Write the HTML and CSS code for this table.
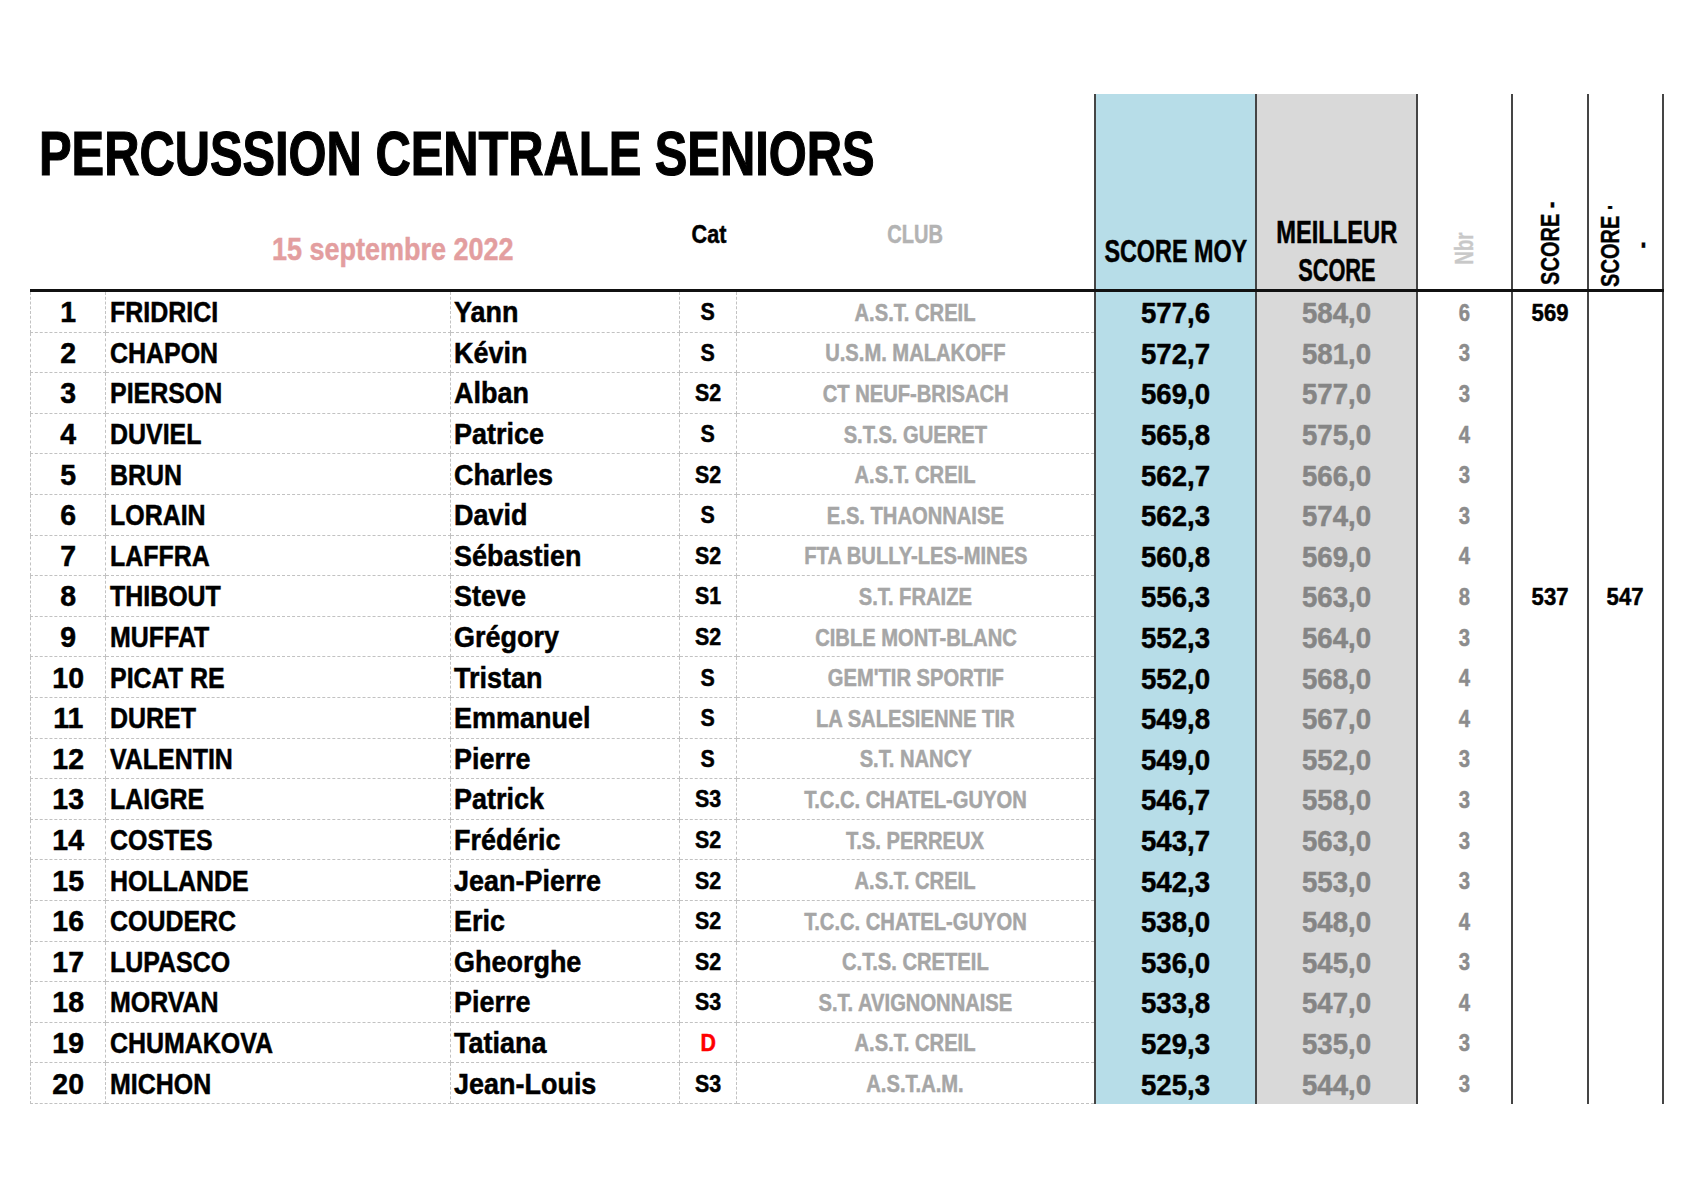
FILE: index.html
```html
<!DOCTYPE html>
<html lang="fr">
<head>
<meta charset="utf-8">
<title>Percussion Centrale Seniors</title>
<link rel="stylesheet" href="styles.css">
</head>
<body>
<main class="sheet">
  <div class="grid head">
    <div class="head-left">
      <h1 class="title"><span>PERCUSSION CENTRALE SENIORS</span></h1>
      <div class="sub">
        <span class="sub-rank"></span>
        <div class="date"><span>15 septembre 2022</span></div>
        <div class="lbl-cat"><span>Cat</span></div>
        <div class="lbl-club"><span>CLUB</span></div>
      </div>
    </div>
    <div class="hc moy"><span class="hmoy">SCORE MOY</span></div>
    <div class="hc best"><div class="hbest"><span class="l1">MEILLEUR</span><span class="l2">SCORE</span></div></div>
    <div class="hc vc nbr"><span class="vt vnbr">Nbr</span></div>
    <div class="hc vc s1"><span class="vt">SCORE -</span></div>
    <div class="hc vc s2"><span class="vt">SCORE ·<br>-</span></div>
  </div>
  <div class="body">
    <div class="grid row"><div class="c rk"><span>1</span></div><div class="c nm"><span>FRIDRICI</span></div><div class="c fn"><span>Yann</span></div><div class="c ct"><span>S</span></div><div class="c cl"><span>A.S.T. CREIL</span></div><div class="c moy"><span>577,6</span></div><div class="c best"><span>584,0</span></div><div class="c nbr"><span>6</span></div><div class="c s1"><span>569</span></div><div class="c s2"></div></div>
    <div class="grid row"><div class="c rk"><span>2</span></div><div class="c nm"><span>CHAPON</span></div><div class="c fn"><span>Kévin</span></div><div class="c ct"><span>S</span></div><div class="c cl"><span>U.S.M. MALAKOFF</span></div><div class="c moy"><span>572,7</span></div><div class="c best"><span>581,0</span></div><div class="c nbr"><span>3</span></div><div class="c s1"></div><div class="c s2"></div></div>
    <div class="grid row"><div class="c rk"><span>3</span></div><div class="c nm"><span>PIERSON</span></div><div class="c fn"><span>Alban</span></div><div class="c ct"><span>S2</span></div><div class="c cl"><span>CT NEUF-BRISACH</span></div><div class="c moy"><span>569,0</span></div><div class="c best"><span>577,0</span></div><div class="c nbr"><span>3</span></div><div class="c s1"></div><div class="c s2"></div></div>
    <div class="grid row"><div class="c rk"><span>4</span></div><div class="c nm"><span>DUVIEL</span></div><div class="c fn"><span>Patrice</span></div><div class="c ct"><span>S</span></div><div class="c cl"><span>S.T.S. GUERET</span></div><div class="c moy"><span>565,8</span></div><div class="c best"><span>575,0</span></div><div class="c nbr"><span>4</span></div><div class="c s1"></div><div class="c s2"></div></div>
    <div class="grid row"><div class="c rk"><span>5</span></div><div class="c nm"><span>BRUN</span></div><div class="c fn"><span>Charles</span></div><div class="c ct"><span>S2</span></div><div class="c cl"><span>A.S.T. CREIL</span></div><div class="c moy"><span>562,7</span></div><div class="c best"><span>566,0</span></div><div class="c nbr"><span>3</span></div><div class="c s1"></div><div class="c s2"></div></div>
    <div class="grid row"><div class="c rk"><span>6</span></div><div class="c nm"><span>LORAIN</span></div><div class="c fn"><span>David</span></div><div class="c ct"><span>S</span></div><div class="c cl"><span>E.S. THAONNAISE</span></div><div class="c moy"><span>562,3</span></div><div class="c best"><span>574,0</span></div><div class="c nbr"><span>3</span></div><div class="c s1"></div><div class="c s2"></div></div>
    <div class="grid row"><div class="c rk"><span>7</span></div><div class="c nm"><span>LAFFRA</span></div><div class="c fn"><span>Sébastien</span></div><div class="c ct"><span>S2</span></div><div class="c cl"><span>FTA BULLY-LES-MINES</span></div><div class="c moy"><span>560,8</span></div><div class="c best"><span>569,0</span></div><div class="c nbr"><span>4</span></div><div class="c s1"></div><div class="c s2"></div></div>
    <div class="grid row"><div class="c rk"><span>8</span></div><div class="c nm"><span>THIBOUT</span></div><div class="c fn"><span>Steve</span></div><div class="c ct"><span>S1</span></div><div class="c cl"><span>S.T. FRAIZE</span></div><div class="c moy"><span>556,3</span></div><div class="c best"><span>563,0</span></div><div class="c nbr"><span>8</span></div><div class="c s1"><span>537</span></div><div class="c s2"><span>547</span></div></div>
    <div class="grid row"><div class="c rk"><span>9</span></div><div class="c nm"><span>MUFFAT</span></div><div class="c fn"><span>Grégory</span></div><div class="c ct"><span>S2</span></div><div class="c cl"><span>CIBLE MONT-BLANC</span></div><div class="c moy"><span>552,3</span></div><div class="c best"><span>564,0</span></div><div class="c nbr"><span>3</span></div><div class="c s1"></div><div class="c s2"></div></div>
    <div class="grid row"><div class="c rk"><span>10</span></div><div class="c nm"><span>PICAT RE</span></div><div class="c fn"><span>Tristan</span></div><div class="c ct"><span>S</span></div><div class="c cl"><span>GEM'TIR SPORTIF</span></div><div class="c moy"><span>552,0</span></div><div class="c best"><span>568,0</span></div><div class="c nbr"><span>4</span></div><div class="c s1"></div><div class="c s2"></div></div>
    <div class="grid row"><div class="c rk"><span>11</span></div><div class="c nm"><span>DURET</span></div><div class="c fn"><span>Emmanuel</span></div><div class="c ct"><span>S</span></div><div class="c cl"><span>LA SALESIENNE TIR</span></div><div class="c moy"><span>549,8</span></div><div class="c best"><span>567,0</span></div><div class="c nbr"><span>4</span></div><div class="c s1"></div><div class="c s2"></div></div>
    <div class="grid row"><div class="c rk"><span>12</span></div><div class="c nm"><span>VALENTIN</span></div><div class="c fn"><span>Pierre</span></div><div class="c ct"><span>S</span></div><div class="c cl"><span>S.T. NANCY</span></div><div class="c moy"><span>549,0</span></div><div class="c best"><span>552,0</span></div><div class="c nbr"><span>3</span></div><div class="c s1"></div><div class="c s2"></div></div>
    <div class="grid row"><div class="c rk"><span>13</span></div><div class="c nm"><span>LAIGRE</span></div><div class="c fn"><span>Patrick</span></div><div class="c ct"><span>S3</span></div><div class="c cl"><span>T.C.C. CHATEL-GUYON</span></div><div class="c moy"><span>546,7</span></div><div class="c best"><span>558,0</span></div><div class="c nbr"><span>3</span></div><div class="c s1"></div><div class="c s2"></div></div>
    <div class="grid row"><div class="c rk"><span>14</span></div><div class="c nm"><span>COSTES</span></div><div class="c fn"><span>Frédéric</span></div><div class="c ct"><span>S2</span></div><div class="c cl"><span>T.S. PERREUX</span></div><div class="c moy"><span>543,7</span></div><div class="c best"><span>563,0</span></div><div class="c nbr"><span>3</span></div><div class="c s1"></div><div class="c s2"></div></div>
    <div class="grid row"><div class="c rk"><span>15</span></div><div class="c nm"><span>HOLLANDE</span></div><div class="c fn"><span>Jean-Pierre</span></div><div class="c ct"><span>S2</span></div><div class="c cl"><span>A.S.T. CREIL</span></div><div class="c moy"><span>542,3</span></div><div class="c best"><span>553,0</span></div><div class="c nbr"><span>3</span></div><div class="c s1"></div><div class="c s2"></div></div>
    <div class="grid row"><div class="c rk"><span>16</span></div><div class="c nm"><span>COUDERC</span></div><div class="c fn"><span>Eric</span></div><div class="c ct"><span>S2</span></div><div class="c cl"><span>T.C.C. CHATEL-GUYON</span></div><div class="c moy"><span>538,0</span></div><div class="c best"><span>548,0</span></div><div class="c nbr"><span>4</span></div><div class="c s1"></div><div class="c s2"></div></div>
    <div class="grid row"><div class="c rk"><span>17</span></div><div class="c nm"><span>LUPASCO</span></div><div class="c fn"><span>Gheorghe</span></div><div class="c ct"><span>S2</span></div><div class="c cl"><span>C.T.S. CRETEIL</span></div><div class="c moy"><span>536,0</span></div><div class="c best"><span>545,0</span></div><div class="c nbr"><span>3</span></div><div class="c s1"></div><div class="c s2"></div></div>
    <div class="grid row"><div class="c rk"><span>18</span></div><div class="c nm"><span>MORVAN</span></div><div class="c fn"><span>Pierre</span></div><div class="c ct"><span>S3</span></div><div class="c cl"><span>S.T. AVIGNONNAISE</span></div><div class="c moy"><span>533,8</span></div><div class="c best"><span>547,0</span></div><div class="c nbr"><span>4</span></div><div class="c s1"></div><div class="c s2"></div></div>
    <div class="grid row"><div class="c rk"><span>19</span></div><div class="c nm"><span>CHUMAKOVA</span></div><div class="c fn"><span>Tatiana</span></div><div class="c ct red"><span>D</span></div><div class="c cl"><span>A.S.T. CREIL</span></div><div class="c moy"><span>529,3</span></div><div class="c best"><span>535,0</span></div><div class="c nbr"><span>3</span></div><div class="c s1"></div><div class="c s2"></div></div>
    <div class="grid row"><div class="c rk"><span>20</span></div><div class="c nm"><span>MICHON</span></div><div class="c fn"><span>Jean-Louis</span></div><div class="c ct"><span>S3</span></div><div class="c cl"><span>A.S.T.A.M.</span></div><div class="c moy"><span>525,3</span></div><div class="c best"><span>544,0</span></div><div class="c nbr"><span>3</span></div><div class="c s1"></div><div class="c s2"></div></div>
  </div>
</main>
</body>
</html>
```

FILE: styles.css
```css
:root {
  --cols: 76px 345px 229px 57px 357px 161px 161px 95px 76px 77px;
  --dash: 1px dashed #c2c2c2;
  --rule: 2px solid #454545;
}

* {
  box-sizing: border-box;
  margin: 0;
  padding: 0;
}

html,
body {
  background: #ffffff;
}

body {
  font-family: "Liberation Sans", Arial, sans-serif;
  font-weight: 700;
  color: #000000;
}

.sheet {
  padding: 94px 0 0 30px;
}

.grid {
  display: grid;
  grid-template-columns: var(--cols);
  width: 1634px;
}

/* condensed look: text is narrowed horizontally and slightly thickened */
.title > span,
.date > span,
.lbl-cat > span,
.lbl-club > span,
.hmoy,
.hbest > span,
.c > span {
  display: inline-block;
  transform: scaleX(var(--sx, 0.86));
  transform-origin: center;
  white-space: nowrap;
  -webkit-text-stroke: var(--stroke, 0.5px) currentColor;
}

/* ---------- header ---------- */
.head {
  height: 198px;
  grid-template-rows: 195px;
  border-bottom: 3px solid #111111;
}

.head-left {
  grid-column: 1 / 6;
  display: flex;
  flex-direction: column;
}

.title {
  font-size: 63px;
  line-height: 1;
  font-weight: 700;
  margin: 28px 0 0 9px;
  white-space: nowrap;
}

.title > span {
  --sx: 0.775;
  --stroke: 1.2px;
  transform-origin: left center;
}

.sub {
  flex: 1;
  display: grid;
  grid-template-columns: 76px 574px 57px 357px;
}

.date {
  grid-column: 2;
  text-align: center;
  font-size: 31px;
  line-height: 1;
  padding-top: 49px;
  color: #e39e9f;
}

.date > span {
  --sx: 0.87;
}

.lbl-cat,
.lbl-club {
  text-align: center;
  font-size: 26px;
  line-height: 1;
  padding-top: 36px;
}

.lbl-cat > span {
  --sx: 0.83;
}

.lbl-club > span {
  --sx: 0.77;
}

.lbl-club {
  color: #b3b3b3;
}

.hc {
  display: flex;
  align-items: flex-end;
  justify-content: center;
  text-align: center;
  border-left: var(--rule);
  white-space: nowrap;
  min-height: 0;
}

.hc.s2 {
  border-right: var(--rule);
}

.hmoy {
  --sx: 0.73;
  font-size: 32px;
  line-height: 1;
  margin-bottom: 22px;
}

.hbest {
  display: flex;
  flex-direction: column;
  align-items: center;
  font-size: 32px;
  line-height: 38px;
}

.hbest .l1 {
  --sx: 0.74;
}

.hbest .l2 {
  --sx: 0.68;
}

.hc.vc {
  align-items: center;
  padding-top: 104px;
}

.hc.nbr {
  padding-top: 115px;
}

.hc.s2 {
  padding-top: 107px;
}

.vt {
  writing-mode: vertical-rl;
  transform: rotate(180deg) scaleY(0.77);
  text-align: center;
  font-size: 26px;
  line-height: 31px;
  white-space: nowrap;
  flex-shrink: 0;
  -webkit-text-stroke: 0.4px currentColor;
}

.vnbr {
  color: #c8c8c8;
  font-size: 25px;
  transform: rotate(180deg) scaleY(0.74);
}

/* ---------- body ---------- */
.row {
  height: 40.6px;
}

.c {
  display: flex;
  align-items: center;
  justify-content: center;
  line-height: 1;
  white-space: nowrap;
  padding-top: 2px;
}

.rk,
.nm,
.fn,
.ct,
.cl {
  border-bottom: var(--dash);
}

.rk,
.nm,
.fn,
.ct {
  border-right: var(--dash);
}

.rk {
  --sx: 0.98;
  border-left: var(--dash);
  font-size: 29px;
}

.nm,
.fn {
  justify-content: flex-start;
  font-size: 29px;
}

.nm > span,
.fn > span {
  transform-origin: left center;
}

.nm {
  --sx: 0.86;
  padding-left: 4px;
}

.fn {
  --sx: 0.93;
  padding-left: 3px;
}

.ct {
  --sx: 0.93;
  font-size: 23px;
}

.ct.red {
  color: #ff0000;
}

.cl {
  --sx: 0.84;
  font-size: 24px;
  color: #a6a6a6;
}

.moy {
  background: #b7dde8;
}

.best {
  background: #d9d9d9;
}

.c.moy,
.c.best,
.c.nbr,
.c.s1,
.c.s2 {
  border-left: var(--rule);
}

.c.s2 {
  border-right: var(--rule);
}

.c.moy {
  --sx: 0.92;
  font-size: 30px;
}

.c.best {
  --sx: 0.92;
  font-size: 30px;
  color: #858585;
}

.c.nbr {
  --sx: 0.88;
  font-size: 23px;
  color: #8c8c8c;
}

.c.s1,
.c.s2 {
  --sx: 0.92;
  font-size: 24px;
}
```
